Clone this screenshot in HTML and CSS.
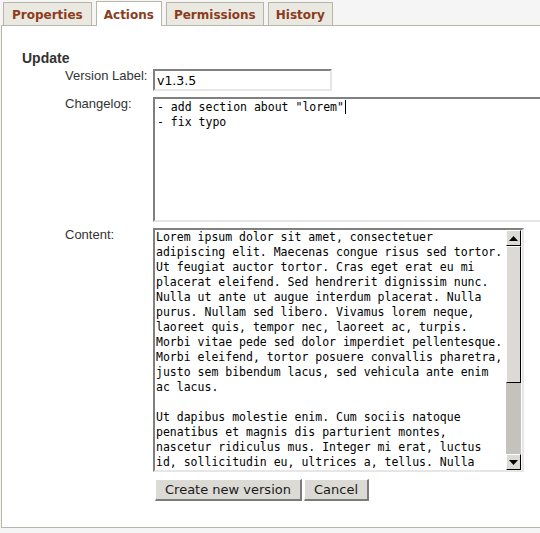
FILE: index.html
```html
<!DOCTYPE html>
<html>
<head>
<meta charset="utf-8">
<link rel="stylesheet" href="styles.css">
</head>
<body>
<div class="tabs">
  <span class="tab">Properties</span>
  <span class="tab active">Actions</span>
  <span class="tab">Permissions</span>
  <span class="tab">History</span>
</div>
<div class="panel">
  <h3 class="title">Update</h3>
  <form class="form">
    <label class="lbl">Version Label:</label>
    <input class="text-input" type="text" value="v1.3.5">
    <label class="lbl">Changelog:</label>
    <div class="cl-wrap">
      <textarea class="area changelog">- add section about "lorem"
- fix typo</textarea>
      <span class="caret"></span>
    </div>
    <label class="lbl">Content:</label>
    <div class="content-box">
      <textarea class="area content">Lorem ipsum dolor sit amet, consectetuer adipiscing elit. Maecenas congue risus sed tortor. Ut feugiat auctor tortor. Cras eget erat eu mi placerat eleifend. Sed hendrerit dignissim nunc. Nulla ut ante ut augue interdum placerat. Nulla purus. Nullam sed libero. Vivamus lorem neque, laoreet quis, tempor nec, laoreet ac, turpis. Morbi vitae pede sed dolor imperdiet pellentesque. Morbi eleifend, tortor posuere convallis pharetra, justo sem bibendum lacus, sed vehicula ante enim ac lacus.

Ut dapibus molestie enim. Cum sociis natoque penatibus et magnis dis parturient montes, nascetur ridiculus mus. Integer mi erat, luctus id, sollicitudin eu, ultrices a, tellus. Nulla facilisi. Nam quis enim. Quisque ornare dui a tortor. Fusce consequat lacus pellentesque metus. Duis euismod. Duis non quam. Maecenas vitae dolor in ipsum auctor vehicula. Vivamus nec nibh eget wisi varius pulvinar.</textarea>
      <div class="scrollbar" aria-hidden="true">
        <span class="sb-btn">
          <svg width="9" height="5" viewBox="0 0 9 5"><path d="M0 5 L4.5 0 L9 5 Z" fill="#000"/></svg>
        </span>
        <span class="sb-thumb"></span>
        <span class="sb-track"></span>
        <span class="sb-btn">
          <svg width="9" height="5" viewBox="0 0 9 5"><path d="M0 0 L4.5 5 L9 0 Z" fill="#000"/></svg>
        </span>
      </div>
    </div>
    <div class="buttons">
      <button type="button" class="btn">Create new version</button>
      <button type="button" class="btn">Cancel</button>
    </div>
  </form>
</div>
</body>
</html>
```
FILE: styles.css
```css
html {
  overflow: hidden;
  background: #f5f5f5;
}
body {
  margin: 0;
  padding: 0 0 0 1px;
  font-family: "Liberation Sans", Arial, sans-serif;
}
.tabs {
  display: flex;
  align-items: flex-end;
  gap: 4px;
  padding-left: 2px;
  height: 25px;
}
.tab {
  font: bold 12px "DejaVu Sans", sans-serif;
  color: #8c3b1c;
  background: #e9e8e1;
  border: 1px solid #b8b6a9;
  border-bottom: none;
  padding: 1px 7px 0 7px;
  height: 21px;
  line-height: 22px;
}
.tab:first-child {
  padding: 1px 8px 0 8px;
}
.tab.active {
  background: #fff;
  height: 22px;
  padding-top: 2px;
  margin-bottom: -1px;
  position: relative;
  z-index: 1;
}
.panel {
  border: 1px solid #b8b6a9;
  background: #fff;
  width: 620px;
  padding: 24px 0 26px 20px;
}
.title {
  margin: 0;
  font: bold 14px "Liberation Sans", Arial, sans-serif;
  line-height: 16px;
  color: #333;
}
.form {
  margin: 3px 0 0 43px;
  display: grid;
  grid-template-columns: 86px auto;
  column-gap: 2px;
  row-gap: 6px;
  justify-content: start;
  align-items: start;
}
.lbl {
  font-size: 13px;
  line-height: 14px;
  color: #333;
  white-space: nowrap;
}
.text-input {
  box-sizing: border-box;
  width: 179px;
  height: 22px;
  margin: 0;
  padding: 0 2px;
  border: 2px solid;
  border-color: #808080 #e6e6e6 #e6e6e6 #808080;
  font: 12.5px "DejaVu Sans", sans-serif;
  color: #000;
  outline: none;
}
.cl-wrap {
  position: relative;
}
.area {
  display: block;
  box-sizing: border-box;
  margin: 0;
  font: 11.5px "DejaVu Sans Mono", monospace;
  line-height: 15px;
  color: #000;
  resize: none;
  outline: none;
  background: #fff;
  overflow: hidden;
}
.changelog {
  width: 420px;
  height: 125px;
  padding: 1px 2px;
  border: 2px solid;
  border-color: #808080 #e6e6e6 #e6e6e6 #808080;
}
.caret {
  position: absolute;
  left: 192px;
  top: 3px;
  width: 1px;
  height: 14px;
  background: #000;
}
.content-box {
  box-sizing: border-box;
  display: flex;
  width: 371px;
  height: 244px;
  border: 2px solid;
  border-color: #808080 #e6e6e6 #e6e6e6 #808080;
  background: #fff;
}
.content {
  flex: 1;
  min-width: 0;
  height: 100%;
  border: none;
  padding: 0 1px;
}
.scrollbar {
  box-sizing: border-box;
  width: 16px;
  margin-right: 1px;
  display: flex;
  flex-direction: column;
  background: #c4c2bc;
  border-left: 1px solid #fff;
}
.sb-btn {
  box-sizing: border-box;
  height: 16px;
  flex: none;
  display: flex;
  align-items: center;
  justify-content: center;
  background: #dcdad5;
  border: 1px solid;
  border-color: #fff #000 #000 #fff;
}
.sb-thumb {
  box-sizing: border-box;
  height: 137px;
  flex: none;
  background: #dcdad5;
  border: 1px solid;
  border-color: #fff #000 #000 #fff;
}
.sb-track {
  flex: 1;
}
.buttons {
  grid-column: 2;
  display: flex;
  gap: 2px;
  margin: 1px 0 0 2px;
}
.btn {
  box-sizing: border-box;
  height: 22px;
  margin: 0;
  padding: 0 9px;
  background: #dcdad5;
  border: solid;
  border-width: 1px 2px 2px 1px;
  border-color: #fff #7b7b7b #7b7b7b #fff;
  font: 13px "DejaVu Sans", sans-serif;
  color: #1a1a1a;
  line-height: 18px;
}
```
